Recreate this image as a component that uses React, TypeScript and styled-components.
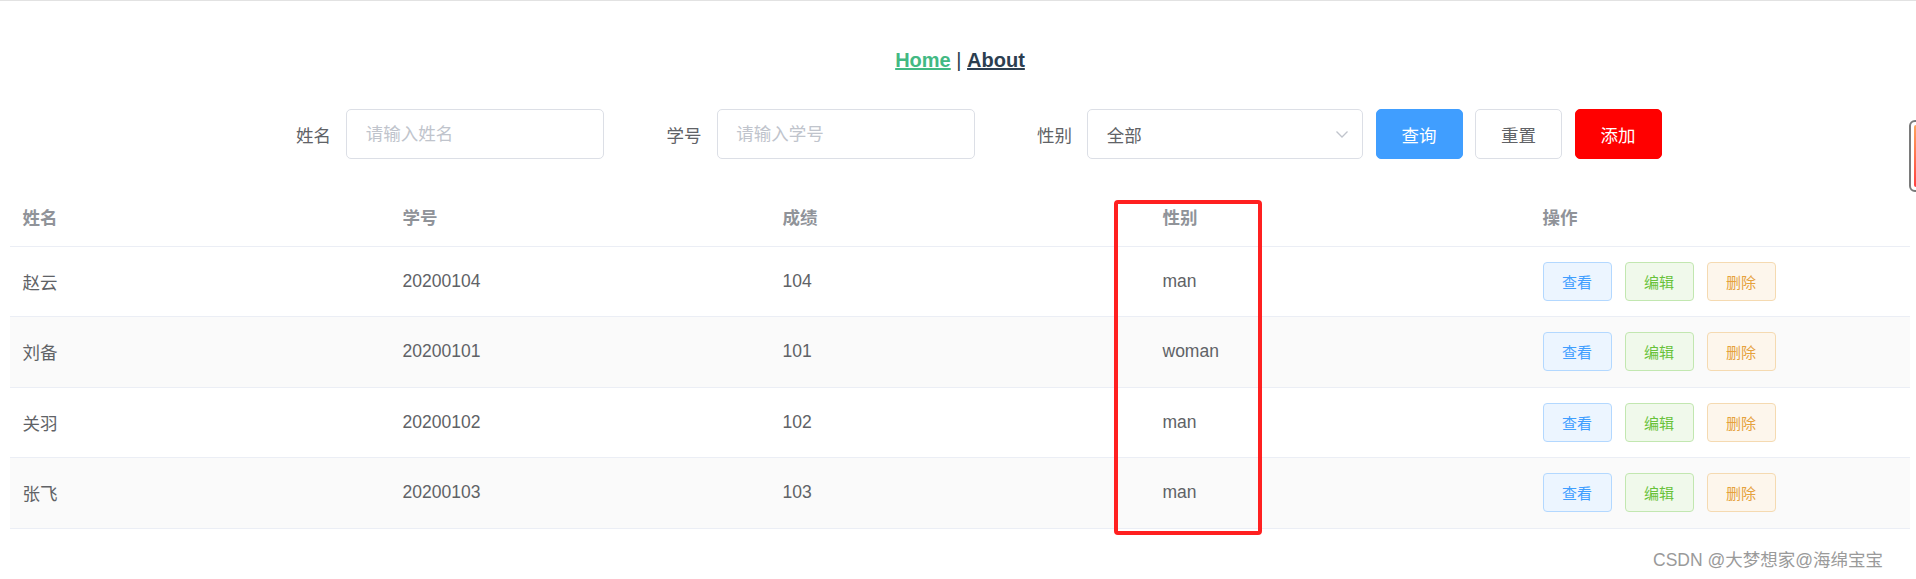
import styled, { createGlobalStyle } from 'styled-components';

interface student {
  name: string;
  id: string;
  score: string;
  sex: string;
}

const students: student[] = [
  { name: '赵云', id: '20200104', score: '104', sex: 'man' },
  { name: '刘备', id: '20200101', score: '101', sex: 'woman' },
  { name: '关羽', id: '20200102', score: '102', sex: 'man' },
  { name: '张飞', id: '20200103', score: '103', sex: 'man' },
];

type actionKind = 'primary' | 'success' | 'warning';

const actionColors: Record<actionKind, { bg: string; border: string; color: string }> = {
  primary: { bg: '#ecf5ff', border: '#b3d8ff', color: '#409eff' },
  success: { bg: '#f0f9eb', border: '#c2e7b0', color: '#67c23a' },
  warning: { bg: '#fdf6ec', border: '#f5dab1', color: '#e6a23c' },
};

const GlobalStyle = createGlobalStyle`
  html, body {
    margin: 0;
    padding: 0;
    overflow: hidden;
    background: #fff;
  }
  body {
    font-family: "Liberation Sans", Arial, "Noto Sans CJK SC", sans-serif;
    border-top: 1px solid #e2e2e2;
  }
`;

function App() {
  return (
    <>
      <GlobalStyle />
      <Page>
        <Nav>
          <NavLink active>Home</NavLink> | <NavLink>About</NavLink>
        </Nav>

        <SearchForm>
          <FormItem>
            <Label>姓名</Label>
            <Input placeholder="请输入姓名" />
          </FormItem>
          <FormItem>
            <Label>学号</Label>
            <Input placeholder="请输入学号" />
          </FormItem>
          <FormItem>
            <Label>性别</Label>
            <Select>
              <span>全部</span>
              <svg width="16" height="16" viewBox="0 0 16 16" fill="none">
                <path d="M2.5 5.5 L8 11 L13.5 5.5" stroke="#c0c4cc" strokeWidth="1.3" />
              </svg>
            </Select>
          </FormItem>
          <FormItem>
            <ButtonGroup>
              <Button variant="primary">查询</Button>
              <Button>重置</Button>
              <Button variant="danger">添加</Button>
            </ButtonGroup>
          </FormItem>
        </SearchForm>

        <Table>
          <thead>
            <tr>
              <HeadCell>姓名</HeadCell>
              <HeadCell>学号</HeadCell>
              <HeadCell>成绩</HeadCell>
              <HeadCell>性别</HeadCell>
              <HeadCell>操作</HeadCell>
            </tr>
          </thead>
          <tbody>
            {students.map((item, index) => (
              <Row key={item.id} striped={index % 2 === 1}>
                <Cell>{item.name}</Cell>
                <Cell>{item.id}</Cell>
                <Cell>{item.score}</Cell>
                <Cell>{item.sex}</Cell>
                <Cell>
                  <Actions>
                    <ActionButton kind="primary">查看</ActionButton>
                    <ActionButton kind="success">编辑</ActionButton>
                    <ActionButton kind="warning">删除</ActionButton>
                  </Actions>
                </Cell>
              </Row>
            ))}
          </tbody>
        </Table>

        <Highlight />
        <Watermark>CSDN @大梦想家@海绵宝宝</Watermark>
      </Page>
      <SideWidget>
        <SideBar />
      </SideWidget>
    </>
  );
}

export default App;

const Page = styled.div`
  position: relative;
  width: 1900px;
  height: 578px;
  margin: 0 10px;
  padding-top: 10px;
  box-sizing: border-box;
`;

const Nav = styled.div`
  padding: 37.5px 0;
  text-align: center;
  font-size: 20px;
  line-height: 23px;
  color: #2c3e50;
`;

const NavLink = styled.a<{ active?: boolean }>`
  font-weight: bold;
  text-decoration: underline;
  color: ${(props) => (props.active ? '#42b983' : '#2c3e50')};
`;

const SearchForm = styled.form`
  display: flex;
  justify-content: center;
  margin: 0 0 27.5px;
`;

const FormItem = styled.div`
  display: flex;
  align-items: center;
  margin-right: 12.5px;
`;

const Label = styled.label`
  width: 100px;
  box-sizing: border-box;
  padding-right: 15px;
  text-align: right;
  font-size: 17.5px;
  color: #606266;
  font-family: "Liberation Sans", "Noto Sans CJK SC", sans-serif;
`;

const Input = styled.input`
  width: 258px;
  height: 50px;
  box-sizing: border-box;
  padding: 0 18.75px;
  border: 1px solid #dcdfe6;
  border-radius: 5px;
  font-size: 17.5px;
  color: #606266;
  outline: none;
  font-family: "Liberation Sans", "Noto Sans CJK SC", sans-serif;

  &::placeholder {
    color: #c0c4cc;
  }
`;

const Select = styled.div`
  width: 276px;
  height: 50px;
  box-sizing: border-box;
  padding: 0 12px 0 18.75px;
  border: 1px solid #dcdfe6;
  border-radius: 5px;
  display: flex;
  align-items: center;
  justify-content: space-between;
  font-size: 17.5px;
  color: #606266;
  font-family: "Liberation Sans", "Noto Sans CJK SC", sans-serif;
`;

const ButtonGroup = styled.div`
  display: flex;
  gap: 12.5px;
`;

const Button = styled.button<{ variant?: 'primary' | 'danger' }>`
  height: 50px;
  padding: 0 25px;
  border-radius: 5px;
  font-size: 17.5px;
  font-family: "Liberation Sans", "Noto Sans CJK SC", sans-serif;
  border: 1px solid
    ${(props) =>
      props.variant === 'primary' ? '#409eff' : props.variant === 'danger' ? '#ff0000' : '#dcdfe6'};
  background: ${(props) =>
    props.variant === 'primary' ? '#409eff' : props.variant === 'danger' ? '#ff0000' : '#fff'};
  color: ${(props) => (props.variant ? '#fff' : '#606266')};
`;

const Table = styled.table`
  width: 1900px;
  table-layout: fixed;
  border-collapse: collapse;
  font-family: "Liberation Sans", "Noto Sans CJK SC", sans-serif;
  font-size: 17.5px;
`;

const HeadCell = styled.th`
  height: 59px;
  padding: 0 12.5px;
  text-align: left;
  font-weight: bold;
  color: #909399;
  border-bottom: 1px solid #ebeef5;
`;

const Row = styled.tr<{ striped: boolean }>`
  background: ${(props) => (props.striped ? '#fafafa' : '#fff')};
`;

const Cell = styled.td`
  height: 69.5px;
  padding: 0 12.5px;
  color: #606266;
  border-bottom: 1px solid #ebeef5;
`;

const Actions = styled.div`
  display: flex;
  gap: 13px;
`;

const ActionButton = styled.button<{ kind: actionKind }>`
  width: 69px;
  height: 39px;
  padding: 0;
  border-radius: 4px;
  font-size: 15px;
  font-family: "Liberation Sans", "Noto Sans CJK SC", sans-serif;
  background: ${(props) => actionColors[props.kind].bg};
  border: 1px solid ${(props) => actionColors[props.kind].border};
  color: ${(props) => actionColors[props.kind].color};
`;

const Highlight = styled.div`
  position: absolute;
  left: 1104px;
  top: 199px;
  width: 148px;
  height: 335px;
  box-sizing: border-box;
  border: 4px solid #ff2020;
  border-radius: 4px;
`;

const Watermark = styled.div`
  position: absolute;
  left: 1643px;
  top: 545px;
  font-size: 17.5px;
  color: #9a9a9a;
  text-shadow: 0 0 1px #fff;
  font-family: "Liberation Sans", "Noto Sans CJK SC", sans-serif;
`;

const SideWidget = styled.div`
  position: absolute;
  left: 1909px;
  top: 120px;
  width: 16px;
  height: 72px;
  box-sizing: border-box;
  border: 2px solid #7a7a7a;
  border-radius: 6px;
  padding: 3px;
  background: #fff;
`;

const SideBar = styled.div`
  width: 100%;
  height: 100%;
  border-radius: 2px;
  background: linear-gradient(#ffa45c, #ff4242);
`;
